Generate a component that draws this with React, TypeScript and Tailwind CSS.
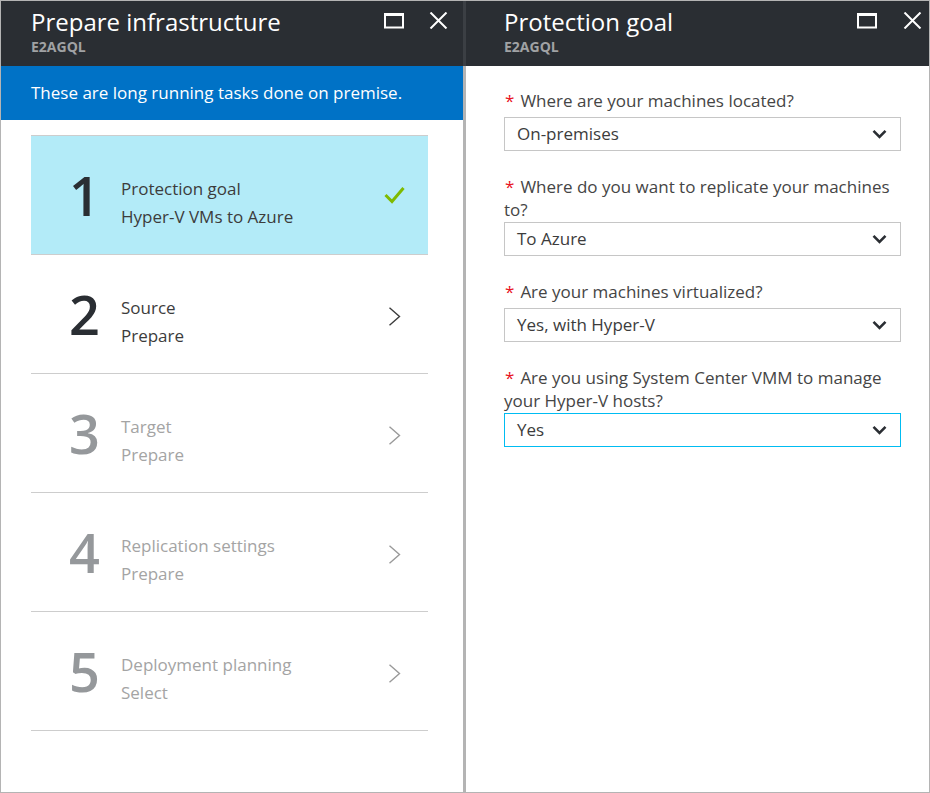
import React from 'react';

const font = { fontFamily: '"Open Sans", "Noto Sans", sans-serif' };

const MaxIcon = () => (
  <svg width="22" height="17" viewBox="0 0 22 17">
    <rect x="2" y="2.5" width="18" height="13" fill="none" stroke="white" strokeWidth="2" />
    <rect x="1" y="1" width="20" height="3" fill="white" />
  </svg>
);

const CloseIcon = () => (
  <svg width="19" height="17" viewBox="0 0 19 17">
    <path d="M1.5 0.5 L17.5 16.5 M17.5 0.5 L1.5 16.5" stroke="white" strokeWidth="2" />
  </svg>
);

const BladeHeader = ({ title, padLeft, padRight, gap }: { title: string; padLeft: string; padRight: string; gap: string }) => (
  <div className={`h-[65px] bg-[#2a2e33] flex items-start ${padLeft} ${padRight}`}>
    <div className="flex-1 pt-[4px]">
      <div className="text-[24px] leading-[34px] text-white">{title}</div>
      <div className="text-[14px] leading-[16px] font-bold text-[#a0a2a4]">E2AGQL</div>
    </div>
    <div className={`flex items-center pt-[11px] ${gap}`}>
      <MaxIcon />
      <CloseIcon />
    </div>
  </div>
);

const Check = () => (
  <svg width="21" height="18" viewBox="0 0 21 18">
    <path d="M1.5 9 L8 15.5 L19.5 2" fill="none" stroke="#7fba00" strokeWidth="3" />
  </svg>
);

const Chevron = ({ color }: { color: string }) => (
  <svg width="13" height="19" viewBox="0 0 13 19">
    <path d="M1.5 0.8 L11.5 9.5 L1.5 18.2" fill="none" stroke={color} strokeWidth="1.4" />
  </svg>
);

const DownIcon = () => (
  <svg width="15" height="10" viewBox="0 0 15 10">
    <path d="M1.5 1.8 L7.5 7.8 L13.5 1.8" fill="none" stroke="#2a2e33" strokeWidth="2.6" />
  </svg>
);

const steps = [
  { n: '1', title: 'Protection goal', sub: 'Hyper-V VMs to Azure', state: 'done' },
  { n: '2', title: 'Source', sub: 'Prepare', state: 'active' },
  { n: '3', title: 'Target', sub: 'Prepare', state: 'disabled' },
  { n: '4', title: 'Replication settings', sub: 'Prepare', state: 'disabled' },
  { n: '5', title: 'Deployment planning', sub: 'Select', state: 'disabled' },
];

const fields = [
  { label: 'Where are your machines located?', value: 'On-premises', wrap: false },
  { label: 'Where do you want to replicate your machines to?', value: 'To Azure', wrap: true },
  { label: 'Are your machines virtualized?', value: 'Yes, with Hyper-V', wrap: false },
  { label: 'Are you using System Center VMM to manage your Hyper-V hosts?', value: 'Yes', wrap: true, focus: true },
];

export default function App() {
  return (
    <div style={font} className="w-[930px] h-[793px] border border-[#b4b4b4] flex bg-white overflow-hidden">
      {/* left blade */}
      <div className="w-[462px] flex flex-col">
        <BladeHeader title="Prepare infrastructure" padLeft="pl-[30px]" padRight="pr-[15px]" gap="gap-[24px]" />
        <div className="h-[54px] bg-[#0072c6] pl-[30px] flex items-center text-white text-[17px]">
          These are long running tasks done on premise.
        </div>
        <div className="mt-[15px] ml-[30px] w-[397px] border-t border-[#cdcdcd]">
          {steps.map((s) => {
            const dis = s.state === 'disabled';
            return (
              <div
                key={s.n}
                className={`h-[119px] border-b border-[#cdcdcd] flex items-center ${
                  s.state === 'done' ? 'bg-[#b3ebf8]' : ''
                }`}
              >
                <div
                  className={`w-[90px] pl-[38px] text-[54px] leading-none font-semibold ${
                    dis ? 'text-[#95989b]' : 'text-[#2a2e33]'
                  }`}
                >
                  {s.n}
                </div>
                <div className={`flex-1 mt-[15px] text-[17px] leading-[28px] ${dis ? 'text-[#a4a4a4]' : 'text-[#3c3c3c]'}`}>
                  <div>{s.title}</div>
                  <div>{s.sub}</div>
                </div>
                <div className="w-[44px] flex">
                  {s.state === 'done' ? (
                    <Check />
                  ) : (
                    <div className="pl-[4px] mt-[4px]">
                      <Chevron color={dis ? '#9a9a9a' : '#3c3c3c'} />
                    </div>
                  )}
                </div>
              </div>
            );
          })}
        </div>
      </div>

      {/* splitter */}
      <div className="w-[3px] flex flex-col">
        <div className="h-[65px] bg-[#3b3f44]" />
        <div className="flex-1 bg-[#b4b4b4]" />
      </div>

      {/* right blade */}
      <div className="flex-1 flex flex-col">
        <BladeHeader title="Protection goal" padLeft="pl-[38px]" padRight="pr-[7px]" gap="gap-[25px]" />
        <div className="pl-[38px] w-[435px] pt-[23px] flex flex-col gap-[24px]">
          {fields.map((f) => (
            <div key={f.label}>
              <div className="text-[17px] leading-[23px] text-[#454545]">
                <span className="text-[#e81123] mr-[6px] ml-[1px]">*</span>
                {f.label}
              </div>
              <div
                className={`${f.wrap ? 'mt-[1px]' : 'mt-[5px]'} h-[34px] flex items-center justify-between pl-[12px] pr-[13px] border text-[17px] text-[#3c3c3c] ${
                  f.focus ? 'border-[#00bcf2]' : 'border-[#c6c6c6]'
                }`}
              >
                <span>{f.value}</span>
                <DownIcon />
              </div>
            </div>
          ))}
        </div>
      </div>
    </div>
  );
}
